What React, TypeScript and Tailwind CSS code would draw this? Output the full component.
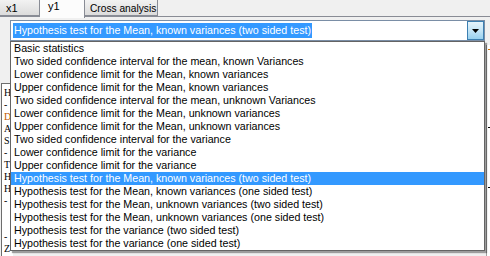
const items = [
  "Basic statistics",
  "Two sided confidence interval for the mean, known Variances",
  "Lower confidence limit for the Mean, known variances",
  "Upper confidence limit for the Mean, known variances",
  "Two sided confidence interval for the mean, unknown Variances",
  "Lower confidence limit for the Mean, unknown variances",
  "Upper confidence limit for the Mean, unknown variances",
  "Two sided confidence interval for the variance",
  "Lower confidence limit for the variance",
  "Upper confidence limit for the variance",
  "Hypothesis test for the Mean, known variances (two sided test)",
  "Hypothesis test for the Mean, known variances (one sided test)",
  "Hypothesis test for the Mean, unknown variances (two sided test)",
  "Hypothesis test for the Mean, unknown variances (one sided test)",
  "Hypothesis test for the variance (two sided test)",
  "Hypothesis test for the variance (one sided test)",
];

const selected = 10;

const leftLines = ["H", "-", "D", "A", "S", "-", "T", "H", "H", "-", "", "", "-", "Z"];

export default function App() {
  return (
    <div className="relative w-[490px] h-[256px] overflow-hidden bg-[#f0f0f0] text-[10.7px] leading-[13px] text-black font-['Liberation_Sans',Arial,sans-serif]">
      {/* Tabs */}
      <div className="flex h-[17px] items-start border-b border-[#898c95] text-[11px] whitespace-nowrap">
        <div className="w-[40px] h-[16px] pt-[2px] pl-[6px] border-r border-b border-[#898c95] bg-gradient-to-b from-[#f2f2f2] to-[#dcdcdc]">
          x1
        </div>
        <div className="w-[45px] h-[18px] pl-[8px] bg-[#fcfcfc] border-r border-[#898c95] z-10">
          y1
        </div>
        <div className="w-[73px] h-[16px] pt-[2px] pl-[5px] border-r border-b border-[#898c95] bg-gradient-to-b from-[#f2f2f2] to-[#dcdcdc] overflow-hidden text-[10.2px]">
          Cross analysis
        </div>
      </div>

      {/* Combo box */}
      <div className="ml-[10px] mt-[3px] w-[475px] h-[21px] flex items-stretch border border-[#7a8ea6] bg-white">
        <div className="flex-1 flex items-center pl-[2px]">
          <span className="bg-[#3399ff] text-white px-[1px] h-[15px] leading-[15px] whitespace-nowrap">
            {items[selected]}
          </span>
        </div>
        <div className="w-[17px] flex items-center justify-center border border-[#3c7fb1] bg-gradient-to-b from-[#e5f4fc] via-[#c4e5f6] to-[#98d1ef]">
          <svg width="7" height="4" viewBox="0 0 7 4">
            <path d="M0 0h7L3.5 4z" fill="#000" />
          </svg>
        </div>
      </div>

      {/* Content behind the dropdown */}
      <div className="flex justify-between mt-[42px]">
        <div className="ml-[1px] w-[12px] h-[180px] bg-white border-l border-t border-[#6d6d6d] pl-[2px] pt-[3px] text-[10px] leading-[12px] font-['Liberation_Serif',serif]">
          {leftLines.map((l, i) => (
            <div key={i} className={i === 2 ? "h-[12px] text-[#c05a00]" : "h-[12px]"}>
              {l}
            </div>
          ))}
        </div>
        <div className="-mt-[38px] w-[4px] h-[220px] bg-white border-l border-[#a0a0a0] relative">
          <div className="absolute left-[1px] top-[4px] w-[2px] h-[1px] bg-[#d07000]" />
          <div className="absolute left-[1px] top-[82px] w-[2px] h-[1px] bg-black" />
          <div className="absolute left-[1px] top-[142px] w-[2px] h-[1px] bg-black" />
        </div>
      </div>

      {/* Dropdown list */}
      <div className="absolute left-[10px] top-[41px] w-[475px] bg-white border border-[#646464] shadow-[2px_2px_1px_rgba(0,0,0,0.35)]">
        {items.map((it, i) => (
          <div
            key={i}
            className={
              i === selected
                ? "h-[13px] pl-[3px] bg-[#3399ff] text-white whitespace-nowrap"
                : "h-[13px] pl-[3px] whitespace-nowrap"
            }
          >
            {it}
          </div>
        ))}
      </div>
    </div>
  );
}
